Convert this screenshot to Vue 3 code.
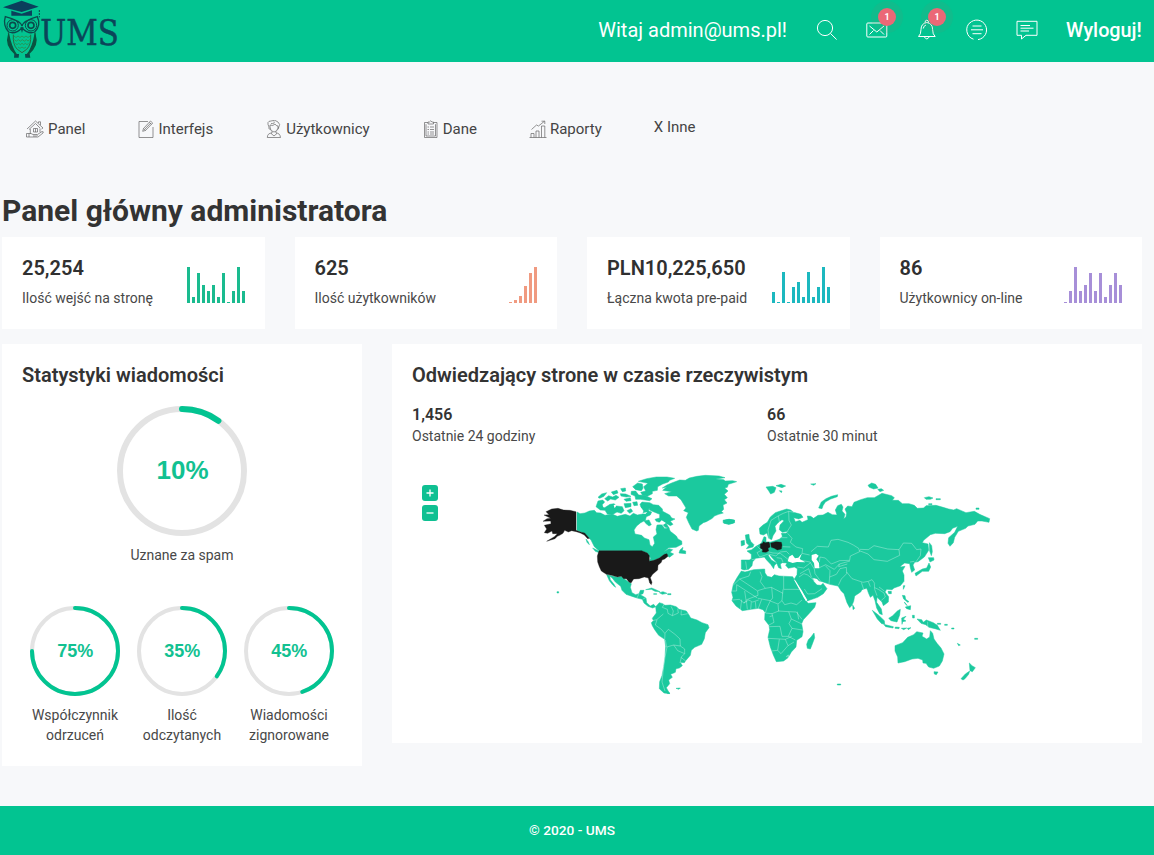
<script setup>
const stats = [
  { value: '25,254', label: 'Ilość wejść na stronę', color: '#1abb8f', bars: [36, 6, 30, 18, 12, 18, 6, 30, 1, 12, 36, 12] },
  { value: '625', label: 'Ilość użytkowników', color: '#f09a80', bars: [1, 3, 7, 17, 30, 36] },
  { value: 'PLN10,225,650', label: 'Łączna kwota pre-paid', color: '#1cb8bf', bars: [11, 1, 31, 1, 16, 21, 6, 31, 6, 16, 36, 16] },
  { value: '86', label: 'Użytkownicy on-line', color: '#a78fd8', bars: [1, 12, 36, 12, 18, 30, 12, 30, 6, 18, 30, 18] },
]
const rings = [
  { value: 75, lines: ['Współczynnik', 'odrzuceń'] },
  { value: 35, lines: ['Ilość', 'odczytanych'] },
  { value: 45, lines: ['Wiadomości', 'zignorowane'] },
]
</script>

<template>
  <div class="page">
    <header class="topbar">
      <svg class="logo" width="140" height="62" viewBox="0 0 420 186">
        <g fill="none" stroke="#0b4a4c" stroke-width="3">
          <path d="M16 50 Q62 62 66 78 Q70 62 112 50 Q124 76 104 96 Q86 104 66 84 Q46 104 26 96 Q8 76 16 50Z" stroke-width="4" />
          <circle cx="38" cy="76" r="17" />
          <circle cx="93" cy="76" r="17" />
          <circle cx="38" cy="76" r="9" stroke-width="5" />
          <circle cx="93" cy="76" r="9" stroke-width="5" />
          <path d="M25 98 Q26 150 50 162 M106 98 Q104 150 80 162 M40 104 Q38 135 52 148 L66 158 L80 148 Q94 135 92 104" stroke="#2a6a42" />
          <path d="M42 108q6 9 12 0q6 9 12 0q6 9 12 0q6 9 12 0M43 119q6 9 12 0q6 9 12 0q6 9 12 0q5 8 10 0M46 130q5 8 10 0q5 8 10 0q5 8 10 0q5 8 10 0M54 141q6 8 12 0q6 8 12 0" stroke="#3a7c3c" stroke-width="2" />
          <path d="M118 30V52" stroke-dasharray="6 3" />
        </g>
        <path d="M9 22 L65 2 L116 20 L65 36Z M34 32 L65 41 L96 31 L96 47 Q65 48 34 47Z" fill="#0b3f5c" />
        <path d="M26 106 Q15 136 48 164 Q32 138 26 106Z M105 106 Q116 136 83 164 Q100 138 105 106Z" fill="#0a5340" stroke="#0a5340" stroke-width="5" />
        <path d="M43 162h14l-1 11H42Z M75 162h14l2 11H76Z M61 82h10l-5 17Z" fill="#0b4a4c" />
        <text x="121" y="135" class="logo-text" textLength="236" lengthAdjust="spacingAndGlyphs">UMS</text>
      </svg>
      <div class="top-actions">
        <span class="welcome">Witaj admin@ums.pl!</span>
        <svg class="ticon" width="22" height="22" viewBox="0 0 22 22"><circle cx="9" cy="9" r="7.6" /><path d="M14.4 14.4 20.6 20.5" /></svg>
        <span class="notify">
          <svg class="ticon" width="22" height="22" viewBox="0 0 22 22"><rect x=".8" y="4" width="20" height="14" rx="1" /><path d="M3.5 7 10.8 13 18 7M3.5 15.5 7.5 11.5M18 15.5 14 11.5" /></svg>
          <i>1</i>
        </span>
        <span class="notify">
          <svg class="ticon" width="22" height="22" viewBox="0 0 22 22"><path d="M2.5 17.5Q5 15.5 5 10.5Q5 4.5 10.8 3.5Q16.6 4.5 16.6 10.5Q16.6 15.5 19.2 17.5Z M8.3 17.8Q10.8 22 13.3 17.8M9 3.7Q9 1.2 10.8 1.2Q12.6 1.2 12.6 3.7M7.3 9.5Q7.6 6.7 10 6" /></svg>
          <i>1</i>
        </span>
        <svg class="ticon" width="22" height="22" viewBox="0 0 22 22"><path d="M7.5 20.2A9.8 9.8 0 0 1 4.5 3.2M3.6 4.2A9.8 9.8 0 1 1 12 20.6M6.5 7H15.5M5 10.8H17M6.5 14.7H15.5" /></svg>
        <svg class="ticon" width="22" height="22" viewBox="0 0 22 22"><path d="M1 2.3H21V16.3H10L5.5 20V16.3H1ZM4.5 6.5H14M4.5 9.2H17.5M4.5 12H13" /></svg>
        <span class="logout">Wyloguj!</span>
      </div>
    </header>

    <nav class="menu">
      <a>
        <svg class="nicon" viewBox="0 0 18 18"><path d="M1 9 9.5 1 17 8 15.5 9M3 9.5 9.5 3.5 14 8M4.3 9V14M14 8.5V12M7.5 12V8.5H11.5V12ZM9.5 8.5V12M.5 17V13.5H3Q5 13 7 14.5H11Q12 15.5 10.5 16H7M11.5 14.5 16 11.5Q18 11.5 17 13L12 17H.5M3 13.5V17M12.5 3V1.8H14.5V5" /></svg>
        Panel
      </a>
      <a>
        <svg class="nicon small" viewBox="0 0 16 18"><path d="M10 1.5H1V17.5H15V7M4.7 11.3 5.5 8.5 12.5 1 14.7 3 7.6 10.4ZM5.5 8.5 7.6 10.4M11.3 2.3 13.4 4.3M6.8 9.2 12.8 3" /></svg>
        Interfejs
      </a>
      <a>
        <svg class="nicon small" viewBox="0 0 16 18"><path d="M3 7Q0 1 5 1Q9-1 12 2Q15 4 12.5 8M4 5Q7 6.5 9 4Q10 6 12 6V8Q11 12 8 12Q4 11.5 4 7ZM3 7Q2 9 4.5 9.5M12.5 7.5Q13 9 11.5 9.5M6 11.5V13Q1.5 13 1.3 17.5H14.5Q14 13 10 13V11.5M5 13.4 8 16 11 13.4M8 1.5Q9 4 5 3.5" /></svg>
        Użytkownicy
      </a>
      <a>
        <svg class="nicon small" viewBox="0 0 16 18"><path d="M5 2.5H1.5V17.5H14V2.5H10.5M5 4V2H6.5Q7.8-.5 9 2H10.5V4ZM3 4.2V16H12.5V4.2M4.5 7H6M7 7H11M4.5 9.5H6M7 9.5H11M4.5 12H6M7 12H11M4.5 14H6M7 14H11" /></svg>
        Dane
      </a>
      <a class="reports">
        <svg class="nicon" viewBox="0 0 18 18"><path d="M.5 17.5H17.5M2 17.5V13.5H5V17.5M7 17.5V11H10V17.5M12.5 17.5V6H15.8V17.5M2.5 9.5 7.5 5 9.5 6 15.5 1.2M12.5 1.2H15.8V4" /></svg>
        Raporty
      </a>
      <a class="raised">X Inne</a>
    </nav>

    <main>
      <h1>Panel główny administratora</h1>
      <section class="stats">
        <article v-for="s in stats" :key="s.value" class="card stat">
          <div>
            <strong>{{ s.value }}</strong>
            <p>{{ s.label }}</p>
          </div>
          <div class="bars">
            <b v-for="(h, i) in s.bars" :key="i" :style="{ height: h + 'px', background: s.color }"></b>
          </div>
        </article>
      </section>

      <section class="panels">
        <article class="card messages">
          <h2>Statystyki wiadomości</h2>
          <div class="big">
            <svg width="130" height="130" viewBox="0 0 130 130">
              <circle cx="65" cy="65" r="62" class="track" stroke-width="6" />
              <circle cx="65" cy="65" r="62" class="arc" stroke-width="6" pathLength="100" stroke-dasharray="10 100" transform="rotate(-90 65 65)" />
              <text x="65.5" y="73" class="pct large">10%</text>
            </svg>
            <p>Uznane za spam</p>
          </div>
          <div class="rings">
            <div v-for="r in rings" :key="r.value">
              <svg width="90" height="90" viewBox="0 0 90 90">
                <circle cx="45" cy="45" r="43" class="track" stroke-width="4" />
                <circle cx="45" cy="45" r="43" class="arc" stroke-width="4" pathLength="100" :stroke-dasharray="r.value + ' 100'" transform="rotate(-90 45 45)" />
                <text x="45.3" y="51.3" class="pct">{{ r.value }}%</text>
              </svg>
              <p><span v-for="l in r.lines" :key="l">{{ l }}</span></p>
            </div>
          </div>
        </article>

        <article class="card visitors">
          <h2>Odwiedzający strone w czasie rzeczywistym</h2>
          <div class="counts">
            <div><strong>1,456</strong><p>Ostatnie 24 godziny</p></div>
            <div><strong>66</strong><p>Ostatnie 30 minut</p></div>
          </div>
          <div class="map">
            <div class="zoom">
              <button><svg width="16" height="16"><path d="M4.5 8H11.5M8 4.5V11.5" /></svg></button>
              <button><svg width="16" height="16"><path d="M4.5 8H11.5" /></svg></button>
            </div>
            <svg class="world" width="480" height="240" viewBox="0 0 1440 720">
              <g class="land">
                <!-- North America -->
                <path d="M141 141 150 146 165 144 178 138 193 136 200 143 212 144 225 151 246 147 262 154 286 148 300 153 310 145 322 150 338 147 341 138 333 125 344 116 358 120 356 138 365 141 361 150 349 155 346 166 332 173 320 183 312 195 315 207 335 211 343 219 357 224 360 240 367 245 374 235 370 216 381 207 378 194 381 180 395 179 405 191 416 188 421 199 439 213 444 222 455 228 456 238 438 247 416 248 401 260 417 251 428 254 420 262 431 267 421 275 417 277 411 269 403 268 388 279 372 286 358 289 362 280 352 264 335 258 207 257 193 245 183 225 166 207 141 196Z" />
                <path d="M447 264 450 255 459 247 457 256 467 258 467 266ZM188 249 205 257 208 263 196 259ZM168 222 175 231 178 239 171 232Z" />
                <path d="M198 125 204 108 218 105 224 111 216 120 224 128 240 118 252 116 260 123 277 125 282 137 274 145 261 141 249 148 232 147 225 136 211 135ZM204 97 215 87 230 83 222 94 209 100ZM224 101 236 92 248 96 258 91 267 97 256 105 242 102 233 108ZM244 81 261 76 264 84 250 89ZM272 71 286 69 287 78 277 80ZM271 86 287 87 303 94 289 96 273 93ZM282 103 301 98 303 107 288 109ZM282 116 303 115 303 125 286 128ZM291 137 303 131 308 139 299 145ZM304 79 317 78 326 90 344 91 366 101 359 107 332 103 317 103 315 93 303 88ZM308 65 323 54 337 57 339 70 334 77 317 74ZM308 112 321 110 323 121 312 122Z" />
                <path d="M325 49 350 41 379 36 411 36 434 40 419 46 415 51 398 57 383 65 382 76 367 79 367 86 352 94 337 90 332 82 347 78 341 65 354 55Z" />
                <path d="M330 118 336 111 359 113 370 119 386 121 397 132 398 139 419 150 425 159 435 162 421 169 429 178 421 182 408 175 418 190 406 187 394 174 379 169 375 163 389 159 389 148 370 140 359 135 355 123 344 122 344 134 333 127ZM342 167 357 165 364 179 357 183 347 175ZM381 190 391 195 386 198Z" />
                <path d="M398 76 410 66 397 69 411 60 425 54 449 45 466 46 478 39 501 34 526 31 567 33 585 38 557 42 581 44 586 48 608 47 620 50 595 58 592 67 584 69 594 78 583 88 592 98 583 104 591 114 579 120 581 133 574 140 580 144 566 148 553 153 547 160 529 170 520 173 507 183 505 196 500 198 486 192 477 175 469 157 475 143 461 137 468 129 463 121 453 104 440 93 416 93 404 86 425 80Z" />
                <path d="M581 166 598 163 614 166 611 174 597 178 582 174 588 171Z" />
                <path d="M230 329 244 332 261 337 276 335 283 342 293 349 304 356 301 367 306 383 317 389 327 386 331 376 342 376 339 386 331 389 348 399 350 413 361 423 371 418 377 425 368 429 354 424 342 414 337 403 321 399 309 395 288 388 276 376 272 364 256 351 246 338 239 333 241 344 252 358 257 367 249 361 238 347Z" />
                <path d="M347 374 365 369 377 374 390 380 375 379 364 373ZM388 383 399 380 411 385 397 388ZM413 386h10v3h-10ZM371 386h9v2h-9Z" />
                <!-- South America -->
                <path d="M377 425 388 413 398 416 405 421 421 420 439 425 447 433 469 438 477 450 482 459 501 465 516 473 534 479 537 488 526 503 523 521 515 538 494 547 484 556 481 571 467 587 463 593 451 592 457 602 448 609 438 611 436 622 422 628 427 637 416 645 419 656 409 668 419 686 402 684 388 671 389 650 396 632 401 605 405 575 407 544 404 523 386 511 374 494 367 482 364 473 370 467 367 460 379 444Z" />
                <path d="M438 670 451 669 447 673ZM410 677 420 685 413 686ZM81 380h5v4h-5Z" />
                <g transform="translate(570 0)">
                  <!-- Eurasia -->
                  <path d="M118 190 129 180 142 172 151 156 166 143 181 138 200 132 212 135 221 142 243 148 249 157 236 162 221 158 226 170 240 166 246 172 264 164 262 153 272 154 281 160 294 151 309 150 324 142 337 149 351 150 346 135 353 122 364 118 369 126 366 138 375 148 371 161 378 156 380 144 375 132 383 123 396 125 402 112 422 104 442 98 463 98 486 85 515 92 523 98 517 106 535 106 547 116 567 116 583 121 592 130 611 129 618 122 648 121 669 127 686 132 701 135 710 131 738 143 763 139 779 148 809 161 807 172 786 168 773 168 765 178 744 183 737 190 715 199 704 217 700 233 690 244 684 235 686 218 704 202 713 184 698 190 690 200 674 206 646 205 631 209 611 226 607 233 624 237 626 256 613 276 594 290 584 292 579 300 584 315 575 322 571 308 569 296 554 294 543 302 541 306 555 304 547 318 552 330 552 349 541 362 522 369 516 374 500 373 495 381 506 395 505 411 490 422 486 411 471 397 470 412 484 432 487 449 479 446 470 429 465 407 459 391 451 397 447 388 440 370 426 374 422 381 404 393 401 409 396 421 389 428 381 413 372 386 363 377 354 363 329 358 307 350 285 346 275 337 282 350 291 360 303 361 309 355 321 371 310 386 293 397 261 408 247 379 230 355 223 342 231 329 232 311 223 306 205 310 197 301 201 294 187 293 181 297 184 311 176 308 169 292 157 279 149 269 144 270 154 285 170 294 163 302 161 311 152 298 139 284 133 276 121 278 108 280 98 290 96 302 86 313 72 315 64 312 64 285 88 285 94 281 94 268 81 258 95 254 108 244 124 235 132 215 138 217 138 231 153 231 178 223 187 214 184 205 198 205 206 199 187 202 178 194 180 180 192 167 186 164 174 173 165 184 168 198 159 212 155 224 146 220 141 204 130 210 120 207Z" />
                  <!-- Africa -->
                  <path d="M64 318 75 321 101 314 134 312 135 324 142 334 155 337 163 329 177 333 218 335 224 345 240 374 250 397 264 415 288 413 284 427 266 447 250 464 245 476 249 500 246 515 230 526 228 546 214 561 204 578 191 588 169 590 160 570 151 546 144 517 149 494 147 481 134 464 135 442 129 434 115 430 94 433 67 437 48 423 36 407 39 397 35 382 40 358 50 340Z" />
                  <path d="M282 504 284 518 277 537 271 552 262 550 260 538 265 524 273 516Z" />
                  <!-- British Isles, Arctic islands -->
                  <path d="M76 210 87 208 88 219 93 230 102 239 99 246 79 251 87 241 80 235 78 225ZM63 228 73 226 74 239 64 243ZM9 166 26 163 43 165 44 173 26 178 10 174ZM138 66 158 64 168 68 163 82 152 87 145 76ZM168 62 183 58 197 63 186 68ZM178 77 186 78 184 83ZM272 57 288 56 281 61ZM444 61 455 54 467 58 474 69 461 72 448 67ZM473 73 484 71 491 76 480 80ZM613 98 627 95 639 99 631 103 618 103ZM648 101h13v3h-13ZM768 129h9v4h-9ZM626 116h10v3h-10ZM296 129 304 111 318 101 334 94 353 89 352 95 332 102 316 111 309 122 306 131Z" />
                  <!-- Islands of Asia and Oceania -->
                  <path d="M628 233 635 242 637 260 634 272 629 258ZM625 278 641 278 642 285 630 291ZM627 294 632 306 626 319 607 319 588 333 585 325 607 312 620 309ZM550 362 555 362 550 373ZM504 379h10v7h-8ZM398 420 404 430 399 434ZM547 391 555 392 557 403 567 410 563 412 551 402ZM556 426 572 422 571 434 560 431ZM553 411 558 417 562 422 556 417ZM457 436 475 450 493 467 494 477 485 476 472 462ZM491 478 520 485 519 489 497 485ZM506 460 518 452 532 438 541 433 539 450 531 471 513 467ZM545 459 558 454 550 463 558 468 548 470 546 478ZM526 486 538 487 537 491 525 490ZM544 490 560 489 551 494ZM562 490 573 488 565 494ZM591 462 605 464 610 472 619 465 640 473 652 481 661 496 645 491 627 487 617 479 603 475ZM652 475h10v3h-10ZM674 478h8v3h-8ZM695 489h7v3h-7ZM577 451h6v8h-5ZM712 535 721 540 716 542ZM764 520h9v3h-9Z" />
                  <path d="M525 542 548 533 563 517 581 509 590 500 609 504 606 514 620 522 629 516 631 497 638 505 642 522 651 535 663 549 672 567 667 588 658 603 641 610 626 606 618 595 609 594 608 585 594 580 576 582 554 590 534 594 533 576 525 558ZM642 620 654 621 649 629 643 627ZM748 594 756 602 766 608 757 620 750 617ZM723 641 736 627 749 618 746 628 735 641 729 645ZM352 657h10v3h-10Z" />
                </g>
              </g>

              <g class="water">
                <path d="M385 176 395 166 408 174 400 179ZM218 123 228 117 222 128ZM251 121 262 117 254 130ZM335 145 352 141 346 147Z" />
                <g transform="translate(570 0)">
                  <path d="M203 289 207 275 217 269 225 280 235 278 246 265 239 282 256 292 231 291 218 294ZM275 270 288 266 296 272 289 283 297 294 298 310 284 310 282 294 275 285ZM279 339 291 342 302 354 295 353 284 347ZM221 343 227 347 262 405 258 409 236 370Z" />
                </g>
              </g>

              <g class="borders">
                <path d="M403 417 397 427 412 433 414 445 427 452 445 444 443 431M427 452 430 438 423 424M454 436 453 450 473 446M367 467 380 464 400 447M381 464 376 480 394 493 405 506 404 524M405 505 415 493 435 508 450 522 451 543 464 552 464 566 453 577 467 588M406 525 410 546 431 540 451 543M431 540 443 557 464 566M411 546 405 577 400 612 396 651 405 678M454 577 450 594M321 399 327 386M339 402 350 397" />
                <g transform="translate(570 0)">
                  <path d="M92 320 87 333 59 342 40 360M35 378H50V359M59 342 113 378 114 391 80 404 72 415M74 378 78 405M50 359 112 399M120 320 126 335 121 350 136 370 154 367 189 385M113 377 136 370M191 333V373H238M155 367 158 399 151 407 114 400M189 373 186 407 174 417 151 408M186 407 194 419 213 414 230 419 246 405M38 405 58 403 72 414 86 405 98 411 116 405M65 404 61 436M79 406 82 433M94 411 92 433M106 410 108 430M125 403 115 430M151 407 141 428 136 444 156 446 176 438 174 418M174 438 206 440 214 462 207 476 216 490 205 514 186 514 180 484 148 485M156 446 162 472 147 480M206 440 229 441 246 463M214 462 248 478M216 490 247 495M205 514 226 525M144 520 180 522 196 523 215 514M178 523 173 556 154 558M173 556 183 566 204 542 222 531M204 542 196 523M201 572 206 570 205 576 199 575ZM232 440 236 463M149 455 158 452" />
                  <path d="M148 224 144 195 153 166 174 153 190 145 206 139 207 166 214 180 202 199M206 139 223 142M175 153 179 175M203 205 216 220 211 232 228 246 248 251 246 265 269 270M180 218 202 218M188 245 211 246M124 256 111 263 119 276M135 258 159 264 181 265 204 283M145 267 168 273 181 261 199 259 208 268M170 278 184 280 189 291M119 276 145 267M112 244 120 252 134 257M77 289 80 312M95 284 109 282" />
                  <path d="M273 260 292 244 325 246 333 226 354 223 384 232 400 240 416 250 419 260 391 273 389 286 359 287 334 297 316 279 300 276 298 291M420 253 445 254 462 242 503 252 537 254 539 271 502 289 462 284 444 267 418 257M537 254 550 234 575 235 590 254 603 252 601 272 586 293M244 286 270 291 283 312 285 326 305 353M232 306 251 309 272 293M240 326 266 311 274 336M237 336 252 326 263 330 280 344M253 372 263 387 284 386 306 371M298 308 317 299 343 313 358 297 390 288M316 302 330 317 329 336 327 357M329 336 349 328 360 311 379 307 380 326 364 342 355 361M380 321 396 341 429 352 445 349 456 344 464 355M424 352 431 373 443 377M445 350 451 365M463 355 464 373 471 392M464 368 475 373 492 384 496 396 484 406M477 366 493 378M358 297 356 305 382 297M570 291 583 289M623 486V470M548 378 550 390" />
                </g>
              </g>

              <g class="selected">
                <path d="M42 150 57 149 48 140 65 132 84 130 101 135 120 136 138 140 138 196 154 202 164 204 178 220 173 221 163 210 151 204 139 200 125 197 115 201 104 196 99 205 89 211 82 214 75 221 50 229 73 215 82 206 68 206 66 198 53 205 43 203 50 192 43 181 63 176 62 168 39 169 51 161 62 160Z" />
                <path d="M207 257H335L352 264 358 272 358 289 372 286 388 279 403 268 411 266 414 274 404 282 396 285 394 292 384 301 383 315 368 328 361 338 366 352 364 359 359 354 355 339 343 336 327 341 311 342 303 354 297 351 289 341 281 341 274 334 262 336 245 331 229 328 214 318 208 305 203 291 202 273Z" />
                <path d="M691 237 698 235 700 230 707 233 716 231 719 236 720 246 714 250 716 258 708 262 697 261 698 254 691 249ZM722 234 738 230 754 232 756 240 754 252 742 255 733 250 724 247Z" />
              </g>
            </svg>
          </div>
        </article>
      </section>
    </main>

    <footer>© 2020 - UMS</footer>
  </div>
</template>

<style>
html, body { margin: 0; background: #f7f8fa; overflow: hidden; }
</style>

<style scoped>
.page { width: 1154px; height: 855px; background: #f7f8fa; color: #333; font-family: Roboto, sans-serif; font-size: 14px; display: flex; flex-direction: column; white-space: nowrap; }
.topbar { height: 62px; background: #02c491; display: flex; justify-content: space-between; box-sizing: border-box; padding-right: 12px; color: #fff; flex: none; }
.logo { display: block; overflow: visible; }
.logo-text { font-family: "DejaVu Serif", serif; font-size: 104px; fill: #0b4559; stroke: #0b4559; stroke-width: 1.5; }
.top-actions { display: flex; align-items: center; height: 60px; font-size: 20px; }
.welcome { margin-right: 29px; }
.ticon { fill: none; stroke: #fff; stroke-width: 1; margin-right: 28px; display: block; }
.logout { font-weight: 500; width: 76px; font-size: 19.8px; }
.notify { position: relative; }
.notify i { position: absolute; left: 12px; top: -11px; width: 18px; height: 18px; border-radius: 50%; background: #eb6876; box-shadow: 0 0 0 7px rgba(120, 130, 110, .12); font: 700 9px/18px Roboto, sans-serif; text-align: center; }
.menu { height: 134px; box-sizing: border-box; padding: 56px 0 0 26px; display: flex; align-items: flex-start; gap: 53px; font-size: 15px; color: #444; flex: none; }
.menu a { display: flex; align-items: center; height: 22px; gap: 4px; }
.menu .reports { margin-left: -1px; gap: 3px; }
.menu .raised { height: 18px; margin-left: -1px; }
.nicon { width: 18px; height: 18px; fill: none; stroke: #666; stroke-width: .7; }
.nicon.small { width: 16px; }
main { padding: 0 12px 0 2px; flex: 1; }
h1 { margin: 0; height: 41px; line-height: 30px; font-size: 30px; font-weight: 700; color: #333; }
.card { background: #fff; box-sizing: border-box; }
.stats { display: grid; grid-template-columns: repeat(4, 1fr); gap: 30px; height: 92px; }
.stat { padding: 20px; display: flex; justify-content: space-between; }
.stat strong { display: block; font-size: 20px; line-height: 23px; font-weight: 600; color: #303030; }
p { margin: 0; color: #484848; line-height: 20px; }
.stat p { margin-top: 8px; }
.bars { display: flex; gap: 2px; align-items: flex-end; height: 46px; }
.bars b { width: 3px; }
.panels { display: grid; grid-template-columns: 360px 750px; gap: 30px; margin-top: 15px; align-items: start; }
.messages { height: 422px; padding: 20px; text-align: center; }
h2 { margin: 0; font-size: 20px; line-height: 22px; font-weight: 600; text-align: left; color: #333; }
.big { margin-top: 20px; }
.big svg, .rings svg { display: block; margin: 0 auto; }
.big p { margin-top: 9px; }
.rings { display: grid; grid-template-columns: repeat(3, 107px); justify-content: center; margin-top: 41px; }
.rings p { margin-top: 9px; }
.rings span { display: block; }
.track { fill: none; stroke: #e3e3e3; }
.arc { fill: none; stroke: #02c491; stroke-linecap: round; }
.pct { font-family: "Liberation Sans", Arial, sans-serif; font-weight: 700; font-size: 18px; fill: #12c191; text-anchor: middle; }
.pct.large { font-size: 26px; }
.visitors { height: 399px; padding: 20px; }
.counts { display: grid; grid-template-columns: 355px 355px; margin-top: 18px; }
.counts strong { display: block; font-size: 16px; line-height: 21px; font-weight: 600; }
.counts p { line-height: 22px; }
.map { display: flex; margin-top: 18px; }
.zoom { width: 108px; padding: 20px 0 0 10px; display: flex; flex-direction: column; gap: 4px; }
.zoom button { display: block; width: 16px; height: 16px; padding: 0; border: 0; border-radius: 3px; background: #0fc092; }
.zoom svg { display: block; fill: none; stroke: #fff; stroke-width: 1.3; }
.world { display: block; }
.land { fill: #1bc99e; stroke: #1bc99e; stroke-width: 1.5; }
.water { fill: #fff; }
.selected { fill: #191919; stroke: #191919; stroke-width: 1; }
.borders { fill: none; stroke: #fff; stroke-opacity: .6; stroke-width: 1.6; stroke-linejoin: round; }
footer { height: 48px; padding: 0 10px 1px 0; background: #02c491; color: #fff; display: flex; align-items: center; justify-content: center; font-size: 13.7px; font-weight: 500; flex: none; }
</style>
